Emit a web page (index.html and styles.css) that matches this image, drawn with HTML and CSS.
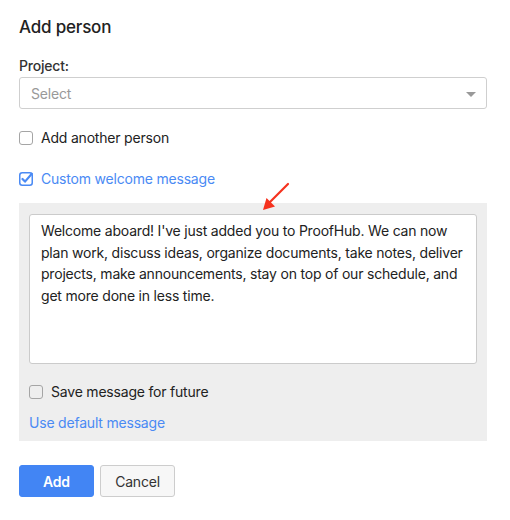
FILE: index.html
```html
<!DOCTYPE html>
<html>
<head>
<meta charset="utf-8">
<link rel="stylesheet" href="styles.css">
</head>
<body>
<div class="dialog">
  <h1 class="title">Add person</h1>
  <div class="field">
    <label class="label">Project:</label>
    <div class="select">
      <span class="placeholder">Select</span>
      <span class="caret"></span>
    </div>
  </div>
  <div class="check-row another">
    <span class="box"></span>
    <span class="check-text">Add another person</span>
  </div>
  <div class="check-row custom">
    <span class="box checked">
      <svg width="14" height="14" viewBox="0 0 14 14"><rect x="0.75" y="0.75" width="12.5" height="12.5" rx="2.5" fill="none" stroke="#4a8af4" stroke-width="1.5"/><path d="M3.5 7 L6 9.6 L12.8 1.8" fill="none" stroke="#4a8af4" stroke-width="2.2" stroke-linecap="round" stroke-linejoin="round"/></svg>
    </span>
    <span class="check-text link">Custom welcome message</span>
  </div>
  <div class="panel">
    <svg class="arrow" width="34" height="34" viewBox="0 0 34 34"><path d="M29 2 L10 21" stroke="#f5321e" stroke-width="2.2" stroke-linecap="round"/><path d="M4 28 L7.5 16 L16 24.5 Z" fill="#f5321e"/></svg>
    <div class="textarea">Welcome aboard! I've just added you to ProofHub. We can now plan work, discuss ideas, organize documents, take notes, deliver projects, make announcements, stay on top of our schedule, and get more done in less time.</div>
    <div class="check-row save">
      <span class="box"></span>
      <span class="check-text">Save message for future</span>
    </div>
    <a class="default-link">Use default message</a>
  </div>
  <div class="actions">
    <button class="btn primary">Add</button>
    <button class="btn secondary">Cancel</button>
  </div>
</div>
</body>
</html>
```

FILE: styles.css
```css
* { box-sizing: border-box; }
html, body { margin: 0; padding: 0; background: #fff; }
body {
  font-family: Inter, "Noto Sans", sans-serif;
  color: #222;
  font-size: 14px;
  letter-spacing: -0.2px;
}
.dialog {
  width: 510px;
  padding: 15px 23px 0 19px;
}
.title {
  margin: 0;
  font-size: 17px;
  font-weight: 500;
  line-height: 24px;
  color: #222;
}
.field { margin-top: 18px; }
.label {
  display: block;
  font-size: 14px;
  font-weight: 500;
  color: #333;
  line-height: 18px;
}
.select {
  margin-top: 2px;
  height: 32px;
  border: 1px solid #cfcfcf;
  border-radius: 3px;
  display: flex;
  align-items: center;
  justify-content: space-between;
  padding: 0 10px 0 11px;
}
.placeholder { color: #999; font-size: 14px; }
.caret {
  width: 0; height: 0;
  border-left: 5px solid transparent;
  border-right: 5px solid transparent;
  border-top: 5px solid #999;
  margin-top: 2px;
}
.check-row {
  display: flex;
  align-items: center;
  gap: 8px;
  line-height: 18px;
}
.box {
  width: 14px; height: 14px;
  border: 1.5px solid #a5a5a5;
  border-radius: 3px;
  flex: none;
  display: block;
}
.box.checked { border: none; }
.box svg { display: block; }
.another { margin-top: 20px; }
.custom { margin-top: 23px; }
.check-text { color: #222; }
.link { color: #4a8af4; }
.panel {
  position: relative;
  margin-top: 15px;
  background: #eeeeee;
  padding: 11px 10px 9px 10px;
}
.arrow {
  position: absolute;
  left: 240px;
  top: -21px;
}
.textarea {
  background: #fff;
  border: 1px solid #cbcbcb;
  border-radius: 3px;
  height: 150px;
  padding: 5px 11px;
  line-height: 21.6px;
  color: #222;
}
.save { margin-top: 19px; }
.default-link {
  display: block;
  margin-top: 13px;
  color: #4a8af4;
  line-height: 18px;
}
.actions {
  margin-top: 24px;
  display: flex;
  gap: 6px;
}
.btn {
  height: 32px;
  border-radius: 3px;
  font-family: inherit;
  font-size: 14px;
  letter-spacing: -0.2px;
  padding: 0;
  width: 75px;
}
.primary {
  background: #4285f4;
  border: 1px solid #4285f4;
  color: #fff;
  font-weight: 600;
}
.secondary {
  background: #f7f7f7;
  border: 1px solid #cdcdcd;
  color: #333;
}
```
